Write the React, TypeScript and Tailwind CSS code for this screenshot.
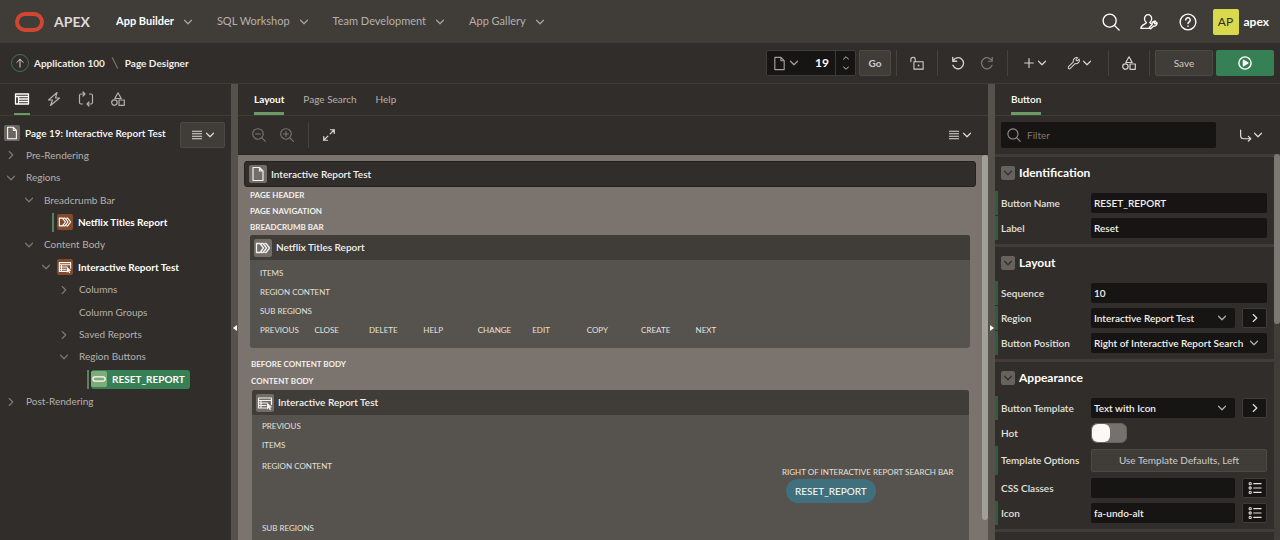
import { useState } from "react";
import type { ReactNode } from "react";
import clsx from "clsx";

type IconProps = { className?: string };

function Svg({ className = "size-4", children }: IconProps & { children: ReactNode }) {
  return (
    <svg
      viewBox="0 0 16 16"
      fill="none"
      stroke="currentColor"
      strokeWidth="1.2"
      strokeLinecap="round"
      strokeLinejoin="round"
      aria-hidden="true"
      className={clsx("shrink-0", className)}
    >
      {children}
    </svg>
  );
}

const ChevronDown = ({ className = "size-2" }: IconProps) => (
  <Svg className={className}>
    <path d="M1 4.5 8 11.5 15 4.5" strokeWidth="2.4" />
  </Svg>
);

const ChevronUp = ({ className = "size-2" }: IconProps) => (
  <Svg className={className}>
    <path d="M1 11.5 8 4.5 15 11.5" strokeWidth="2.4" />
  </Svg>
);

const ChevronRight = ({ className = "size-2" }: IconProps) => (
  <Svg className={className}>
    <path d="M4.5 1 11.5 8 4.5 15" strokeWidth="2.4" />
  </Svg>
);

const FileIcon = ({ className }: IconProps) => (
  <Svg className={className}>
    <path d="M3 1.5h6.5L13 5v9.5H3zM9.5 1.5V5H13" />
  </Svg>
);

const LinesIcon = ({ className = "size-3" }: IconProps) => (
  <Svg className={className}>
    <path d="M0 2h16M0 6h16M0 10h16M0 14h16" strokeWidth="1.6" strokeLinecap="butt" />
  </Svg>
);

const SearchIcon = ({ className }: IconProps) => (
  <Svg className={className}>
    <circle cx="6.8" cy="6.8" r="5.8" />
    <path d="m11 11 4.2 4.2" />
  </Svg>
);

const ShapesIcon = ({ className }: IconProps) => (
  <Svg className={className}>
    <path d="M8 1.8 11.2 7.5H4.8zM9 9h5.3v5.3H9z" />
    <circle cx="4.4" cy="11.6" r="2.7" />
  </Svg>
);

const BreadcrumbIcon = ({ className }: IconProps) => (
  <Svg className={className}>
    <path d="M1.5 3.5h3.5L8.5 8 5 12.5H1.5zM6.5 3.5H8L11.5 8 8 12.5H6.5M10 3.5h1L14.5 8 11 12.5h-1" strokeWidth="1.3" />
  </Svg>
);

const ReportIcon = ({ className }: IconProps) => (
  <Svg className={className}>
    <path d="M9.5 13H1.5V3h13v6.5M1.5 5.5h13M1.5 8h9M1.5 10.5h7.5M4 5.5V13" strokeWidth="1.2" />
    <path d="m10 7.8 5.2 4.4-2.3.2 1.1 2.2-1.2.6-1.1-2.2-1.7 1.5z" fill="currentColor" stroke="none" />
  </Svg>
);

const PillIcon = ({ className }: IconProps) => (
  <Svg className={className}>
    <rect x="1" y="5.5" width="14" height="5" rx="2.5" strokeWidth="1.4" />
  </Svg>
);

const ListIcon = ({ className }: IconProps) => (
  <Svg className={className}>
    <path d="M6.5 3H15M6.5 8H15M6.5 13H15" />
    <circle cx="2.5" cy="3" r="1.3" />
    <circle cx="2.5" cy="8" r="1.3" />
    <circle cx="2.5" cy="13" r="1.3" />
  </Svg>
);

const WrenchIcon = ({ className }: IconProps) => (
  <Svg className={className}>
    <path d="M13.9 3.6 11.6 5.6 10.2 4.3 12.2 2A3.9 3.9 0 0 0 7.3 6.8L1.8 12.2a1.4 1.4 0 0 0 2 2L9.2 8.7A3.9 3.9 0 0 0 13.9 3.6z" />
  </Svg>
);

const ZoomIcon = ({ plus }: { plus?: boolean }) => (
  <Svg className="size-[14px]">
    <circle cx="6.8" cy="6.8" r="6" />
    <path d="m11.2 11.2 4.2 4.2M4 6.8h5.600" />
    {plus && <path d="M6.8 4v5.600" />}
  </Svg>
);

const UndoIcon = () => (
  <Svg className="size-[14px]">
    <path d="M2 1.5v4.5h4.5M2.300 5.700A6.300 6.300 0 1 1 2.200 10.600" strokeWidth="1.500" />
  </Svg>
);

const RedoIcon = () => (
  <Svg className="size-[14px]">
    <path d="M14 1.5v4.5H9.500M13.700 5.700A6.300 6.300 0 1 0 13.800 10.600" strokeWidth="1.400" />
  </Svg>
);

const NAV = ["App Builder", "SQL Workshop", "Team Development", "App Gallery"];

type TreeNode = {
  label: string;
  pad: string;
  toggle?: "open" | "closed";
  kind?: "breadcrumb" | "report" | "button";
  changed?: boolean;
};

const TREE: TreeNode[] = [
  { label: "Pre-Rendering", pad: "pl-[7px]", toggle: "closed" },
  { label: "Regions", pad: "pl-[7px]", toggle: "open" },
  { label: "Breadcrumb Bar", pad: "pl-[25px]", toggle: "open" },
  { label: "Netflix Titles Report", pad: "pl-[52px]", kind: "breadcrumb", changed: true },
  { label: "Content Body", pad: "pl-[25px]", toggle: "open" },
  { label: "Interactive Report Test", pad: "pl-[42px]", toggle: "open", kind: "report" },
  { label: "Columns", pad: "pl-[60px]", toggle: "closed" },
  { label: "Column Groups", pad: "pl-[79px]" },
  { label: "Saved Reports", pad: "pl-[60px]", toggle: "closed" },
  { label: "Region Buttons", pad: "pl-[60px]", toggle: "open" },
  { label: "RESET_REPORT", pad: "pl-[87px]", kind: "button", changed: true },
  { label: "Post-Rendering", pad: "pl-[7px]", toggle: "closed" },
];

const BUTTON_SLOTS = ["PREVIOUS", "CLOSE", "DELETE", "HELP", "CHANGE", "EDIT", "COPY", "CREATE", "NEXT"];

function Divider() {
  return <span className="h-[26px] w-px bg-[#46423d]" />;
}

function Header() {
  return (
    <header className="flex h-[43px] shrink-0 items-center bg-[#403c38] pr-[11px] pl-[15px]">
      <a href="#home" className="flex items-center gap-[10px]">
        <svg viewBox="0 0 29 20" className="h-5 w-[29px]" aria-hidden="true">
          <rect x="2" y="2" width="25" height="16" rx="8" fill="none" stroke="#cf4733" strokeWidth="4" />
        </svg>
        <span className="w-[52px] text-[14px] font-bold text-[#dedbd8]">APEX</span>
      </a>
      <nav className="flex items-center gap-[25px] pl-[10px]">
        {NAV.map((item, i) => (
          <button
            key={item}
            className={clsx(
              "flex items-center gap-[10px] text-[11px]",
              i === 0 ? "font-bold text-white" : "text-[#b5b1ad]",
            )}
          >
            {item}
            <ChevronDown className="size-2 text-[#a8a4a0]" />
          </button>
        ))}
      </nav>
      <div className="ml-auto flex items-center text-white">
        <button aria-label="Search">
          <SearchIcon className="size-[18px]" />
        </button>
        <button aria-label="Administration" className="ml-5">
          <Svg className="size-[18px]">
            <path d="M4 5.200a3.200 3.700 0 0 1 6.400 0c0 1.700-.8 2.800-1.700 3.300M5.700 8.500C4.800 8 4 6.900 4 5.200M5.700 8.500c0 1.500-4.900 1.500-4.900 5.200h8.700M8.700 8.500l1.300 1" />
            <path d="m14.900 8.300-1.500 1.400-1-1 1.400-1.400a2.400 2.400 0 0 0-3 3L8.300 12.800l1.200 1.300 2.600-2.500a2.400 2.400 0 0 0 2.800-3.300z" />
          </Svg>
        </button>
        <button aria-label="Help" className="ml-[21px]">
          <Svg className="size-[18px]">
            <circle cx="8" cy="8" r="7" />
            <path d="M6 6.300a2 2 0 1 1 3 1.700c-.7.400-1 .7-1 1.400M8 11.500v.2" strokeWidth="1.300" />
          </Svg>
        </button>
        <button className="ml-4 flex items-center gap-[5px] text-[12px] font-bold">
          <span className="flex size-[26px] items-center justify-center rounded-[2px] bg-[#d9d94d] text-[12px] font-normal text-[#312d2a]">
            AP
          </span>
          apex
        </button>
      </div>
    </header>
  );
}

function PageToolbar() {
  return (
    <div className="flex h-[41px] shrink-0 items-center border-b border-[#403c38] pr-[6px] pl-[11px] text-[#d5d2cf]">
      <a
        href="#up"
        aria-label="Up"
        className="flex size-[18px] items-center justify-center rounded-full border border-[#48686f]"
      >
        <Svg className="size-[10px]">
          <path d="M8 14.500V2M3 7l5-5 5 5" strokeWidth="1.600" />
        </Svg>
      </a>
      <div className="flex items-center gap-1 pl-[5px] text-[10px] font-bold text-[#efedeb]">
        <a href="#app">Application 100</a>
        <Svg className="size-3 text-[#7d7873]">
          <path d="M4.500 1 11.500 15" strokeWidth="1.500" />
        </Svg>
        <span>Page Designer</span>
      </div>
      <div className="ml-auto flex items-center">
        <div className="flex h-[26px] items-stretch rounded-[2px] border border-[#403c38] bg-[#161513]">
          <button aria-label="Page Finder" className="flex items-center gap-[3px] pl-[5px] text-[#a5a19d]">
            <FileIcon className="size-[15px]" />
            <ChevronDown />
          </button>
          <input
            aria-label="Page number"
            defaultValue="19"
            className="w-[37px] bg-transparent pr-[6px] text-right text-[12px] font-bold text-white outline-none"
          />
          <span className="flex w-5 flex-col items-center justify-between border-l border-[#403c38] py-1">
            <button aria-label="Next page">
              <ChevronUp className="size-[6px]" />
            </button>
            <button aria-label="Previous page">
              <ChevronDown className="size-[6px]" />
            </button>
          </span>
        </div>
        <button className="ml-[3px] h-[26px] w-8 rounded-[2px] border border-[#4d4944] bg-[#403c38] text-[10px] font-bold text-[#cfccc8]">
          Go
        </button>
        <div className="flex items-center pl-[5px]">
          <Divider />
          <button aria-label="Unlocked" className="flex w-10 justify-center">
            <Svg className="size-[14px]">
              <path d="M4.500 6.500h10.500v8.500H4.500zM1 6.500V4a2.500 2.500 0 0 1 5 0v2.500" />
              <path d="M9.800 10.500v.5" strokeWidth="1.800" />
            </Svg>
          </button>
          <Divider />
          <div className="flex w-[69px] justify-between px-[13px]">
            <button aria-label="Undo">
              <UndoIcon />
            </button>
            <button aria-label="Redo" className="text-[#7d7873]">
              <RedoIcon />
            </button>
          </div>
          <Divider />
          <div className="flex w-[100px] items-center justify-between pr-[17px] pl-4">
            <button aria-label="Create" className="flex items-center gap-1">
              <Svg className="size-[10px]">
                <path d="M8 1v14M1 8h14" strokeWidth="1.800" />
              </Svg>
              <ChevronDown />
            </button>
            <button aria-label="Utilities" className="flex items-center gap-[2px]">
              <WrenchIcon className="size-[14px]" />
              <ChevronDown />
            </button>
          </div>
          <Divider />
          <button aria-label="Shared Components" className="flex w-10 justify-center">
            <ShapesIcon />
          </button>
          <Divider />
        </div>
        <button className="ml-[5px] h-[26px] w-[58px] rounded-[2px] border border-[#4d4944] bg-[#403c38] text-[10px] text-[#cfccc8]">
          Save
        </button>
        <button
          aria-label="Save and Run Page"
          className="ml-[3px] flex h-[26px] w-[58px] items-center justify-center rounded-[2px] bg-[#378056] text-white"
        >
          <Svg className="size-[14px]">
            <circle cx="8" cy="8" r="7" strokeWidth="1.600" />
            <path d="m6 4.500 5.500 3.500L6 11.500z" fill="currentColor" />
          </Svg>
        </button>
      </div>
    </div>
  );
}

const KIND_ICON = { breadcrumb: BreadcrumbIcon, report: ReportIcon, button: PillIcon };

function TreeRow({ node }: { node: TreeNode }) {
  const Icon = node.kind && KIND_ICON[node.kind];
  const isButton = node.kind === "button";
  return (
    <li className={clsx("flex items-center", node.pad)}>
      {node.toggle && (
        <button
          aria-label={`Toggle ${node.label}`}
          className={clsx("flex text-[#7d7873]", Icon ? "mr-[7px]" : "mr-[11px]")}
        >
          {node.toggle === "open" ? <ChevronDown /> : <ChevronRight />}
        </button>
      )}
      {node.changed && <span className={clsx("h-[19px] w-[2px] bg-[#5a8159]", isButton ? "mr-[2px]" : "mr-[3px]")} />}
      {Icon ? (
        <a
          href={`#${node.label}`}
          className={clsx(
            "flex items-center gap-[5px] text-[10px] font-bold text-white",
            isButton && "h-[19px] rounded-[3px] bg-[#378056] pr-[5px]",
          )}
        >
          <span
            className={clsx(
              "flex size-4 items-center justify-center rounded-[2px]",
              isButton ? "bg-[#7fab78]" : "bg-[#844a2c]",
            )}
          >
            <Icon className="size-[14px]" />
          </span>
          {node.label}
        </a>
      ) : (
        <a href={`#${node.label}`} className="text-[10px] text-[#b5b1ad]">
          {node.label}
        </a>
      )}
    </li>
  );
}

function LeftPane() {
  const tabs = [
    { name: "Rendering", icon: <Svg><path d="M1.500 3h13v10h-13zM1.500 5.500h13M4.500 5.500v7.500M4.500 8h10M4.500 10.500h10" strokeWidth="1.300" /></Svg> },
    { name: "Dynamic Actions", icon: <Svg><path d="M11 1.500 2.500 9h4L4.500 14.500 13.500 7H9.500z" /></Svg> },
    {
      name: "Processing",
      icon: <Svg><path d="M6.500 3H3a1.500 1.500 0 0 0-1.500 1.500v7A1.500 1.500 0 0 0 3 13h1.500M11.500 3H13a1.500 1.500 0 0 1 1.500 1.500v7A1.500 1.500 0 0 1 13 13H9.500M5 1l2 2-2 2M11 11l-2 2 2 2" /></Svg>,
    },
    { name: "Page Shared Components", icon: <ShapesIcon /> },
  ];
  return (
    <aside className="w-[231px] shrink-0">
      <div className="flex h-8 items-stretch gap-4 border-b border-[#403c38] pl-[14px]">
        {tabs.map((tab, i) => (
          <button
            key={tab.name}
            aria-label={tab.name}
            className={clsx(
              "flex h-[31px] items-center border-b-2",
              i === 0 ? "border-[#6a9a66] text-white" : "border-transparent text-[#b5b1ad]",
            )}
          >
            {tab.icon}
          </button>
        ))}
      </div>
      <div className="flex h-7 items-start justify-between pt-[6px] pr-[6px] pl-1">
        <a href="#page" className="flex h-[22px] items-center gap-[5px] text-[10px] font-semibold text-white">
          <span className="flex size-4 items-center justify-center rounded-[2px] bg-[#6b6560]">
            <FileIcon className="size-[14px]" />
          </span>
          Page 19: Interactive Report Test
        </a>
        <button
          aria-label="Tree menu"
          className="flex h-[26px] w-[45px] shrink-0 items-center justify-center gap-1 rounded-[2px] border border-[#4d4944] bg-[#403c38] text-[#dedbd8]"
        >
          <LinesIcon className="size-[10px]" />
          <ChevronDown />
        </button>
      </div>
      <ul className="grid h-[269px] auto-rows-fr">
        {TREE.map((node) => (
          <TreeRow key={node.label} node={node} />
        ))}
      </ul>
    </aside>
  );
}

function Splitter({ side }: { side: "left" | "right" }) {
  return (
    <div className="flex w-[7px] shrink-0 items-center justify-center bg-[#56524b] pt-8">
      <button aria-label={`Collapse ${side} pane`} className="text-white">
        <svg viewBox="0 0 4 6" className="h-[6px] w-1" fill="currentColor" aria-hidden="true">
          <path d={side === "left" ? "M4 0v6L0 3z" : "M0 0v6l4-3z"} />
        </svg>
      </button>
    </div>
  );
}

function CardTitle({ icon, children, className }: { icon: ReactNode; children: ReactNode; className: string }) {
  return (
    <div className={clsx("flex items-center gap-1 px-1 text-[10px] font-semibold text-[#f3f1ef]", className)}>
      <span className="flex size-[18px] items-center justify-center rounded-[2px] bg-[#736c67]">{icon}</span>
      {children}
    </div>
  );
}

function CenterPane() {
  const [active, setActive] = useState("Layout");
  return (
    <main className="flex min-w-0 flex-1 flex-col">
      <div className="flex h-8 shrink-0 gap-[19px] border-b border-[#403c38] pl-4 text-[10px]">
        {["Layout", "Page Search", "Help"].map((tab) => (
          <button
            key={tab}
            onClick={() => setActive(tab)}
            className={clsx(
              "h-[31px] border-b-3 pt-[2px]",
              active === tab ? "border-[#6a9a66] font-bold text-white" : "border-transparent text-[#b5b1ad]",
            )}
          >
            {tab}
          </button>
        ))}
      </div>
      <div className="flex h-[39px] shrink-0 items-center gap-[14px] border-b border-[#2a2624] pr-[17px] pl-[14px] text-[#7d7873]">
        <button aria-label="Zoom out">
          <ZoomIcon />
        </button>
        <button aria-label="Zoom in">
          <ZoomIcon plus />
        </button>
        <Divider />
        <button aria-label="Expand" className="text-[#dedbd8]">
          <Svg className="size-3">
            <path d="M1 10v5h5M1 15l5.500-5.500M10 1h5v5M15 1 9.500 6.500" strokeWidth="1.600" />
          </Svg>
        </button>
        <button aria-label="Layout menu" className="ml-auto flex items-center gap-1 text-[#dedbd8]">
          <LinesIcon className="size-[10px]" />
          <ChevronDown />
        </button>
      </div>
      <div className="flex min-h-0 flex-1 overflow-hidden bg-[#7a736e]">
        <div className="min-w-0 flex-1 pt-[6px] pr-[6px] pl-[6px] text-[8px] text-[#e4e1de]">
          <CardTitle icon={<FileIcon />} className="h-[26px] rounded-[3px] border border-[#25211f] bg-[#312d2a]">
            Interactive Report Test
          </CardTitle>
          <div className="flex flex-col pl-[6px] leading-4 font-bold text-[#f3f1ef]">
            <span>PAGE HEADER</span>
            <span>PAGE NAVIGATION</span>
            <span>BREADCRUMB BAR</span>
          </div>
          <section className="mr-[6px] ml-[6px] rounded-[3px] bg-[#56524d] pb-2">
            <CardTitle icon={<BreadcrumbIcon />} className="h-[25px] rounded-t-[3px] bg-[#403c38]">
              Netflix Titles Report
            </CardTitle>
            <div className="flex flex-col px-[10px] pt-1 leading-[19px]">
              <span>ITEMS</span>
              <span>REGION CONTENT</span>
              <span>SUB REGIONS</span>
              <div className="grid w-[490px] grid-cols-9">
                {BUTTON_SLOTS.map((slot) => (
                  <span key={slot}>{slot}</span>
                ))}
              </div>
            </div>
          </section>
          <div className="flex flex-col pt-2 pl-[7px] leading-[17px] font-bold text-[#f3f1ef]">
            <span>BEFORE CONTENT BODY</span>
            <span>CONTENT BODY</span>
          </div>
          <section className="mr-[7px] ml-2 rounded-[3px] bg-[#56524d] pb-8">
            <CardTitle icon={<ReportIcon />} className="h-[25px] rounded-t-[3px] bg-[#403c38]">
              Interactive Report Test
            </CardTitle>
            <div className="flex flex-col px-[10px] pt-[2px] leading-[19px]">
              <span>PREVIOUS</span>
              <span>ITEMS</span>
              <div className="flex justify-between pt-[2px] pr-[7px]">
                <span>REGION CONTENT</span>
                <div className="flex w-[170px] flex-col items-start pt-2 leading-[14px]">
                  <span className="whitespace-nowrap">RIGHT OF INTERACTIVE REPORT SEARCH BAR</span>
                  <button className="ml-1 h-6 rounded-full bg-[#40707e] px-[9px] text-[10px] text-white">
                    RESET_REPORT
                  </button>
                </div>
              </div>
              <span className="pt-4">SUB REGIONS</span>
            </div>
          </section>
        </div>
        <div className="w-[6px]">
          <div className="h-[365px] rounded-[3px] bg-[#a29e9a]" />
        </div>
      </div>
    </main>
  );
}

function PropertySection({ title, children }: { title: string; children: ReactNode }) {
  return (
    <section className="border-b-3 border-[#403c38] pb-1">
      <h3 className="flex h-[34px] items-center gap-1 pb-[2px] pl-[6px] text-[12px] font-bold text-white">
        <button
          aria-label={`Collapse ${title}`}
          className="flex size-[14px] items-center justify-center rounded-[2px] bg-[#67625d] text-[#312d2a]"
        >
          <ChevronDown />
        </button>
        {title}
      </h3>
      <div className="flex flex-col gap-px">{children}</div>
    </section>
  );
}

type PropertyProps = { id: string; label: string; changed?: boolean; tall?: boolean; children: ReactNode };

function Property({ id, label, changed = true, tall, children }: PropertyProps) {
  return (
    <div
      className={clsx(
        "flex items-center border-l-3 pr-[7px] pl-[3px]",
        tall ? "h-[29px]" : "h-6",
        changed ? "border-[#2f5d40]" : "border-transparent",
      )}
    >
      <label htmlFor={id} className="w-[90px] shrink-0 text-[10px] font-semibold text-[#e4e1de]">
        {label}
      </label>
      <div className="flex min-w-0 flex-1 items-center gap-[7px]">{children}</div>
    </div>
  );
}

function TextField({ id, value }: { id: string; value: string }) {
  return (
    <input
      id={id}
      defaultValue={value}
      className="h-5 min-w-0 flex-1 rounded-[2px] bg-[#161513] px-[3px] text-[10px] font-semibold text-[#f3f1ef] outline-none"
    />
  );
}

function SelectField({ id, value }: { id: string; value: string }) {
  return (
    <div className="relative min-w-0 flex-1">
      <select
        id={id}
        defaultValue={value}
        className="block h-5 w-full appearance-none rounded-[2px] bg-[#161513] pr-[23px] pl-[3px] text-[10px] font-semibold text-[#f3f1ef] outline-none"
      >
        <option>{value}</option>
      </select>
      <ChevronDown className="pointer-events-none absolute top-[6px] right-[9px] size-2 text-[#b5b1ad]" />
    </div>
  );
}

function SquareButton({ label, children }: { label: string; children: ReactNode }) {
  return (
    <button
      aria-label={label}
      className="flex h-5 w-[25px] shrink-0 items-center justify-center rounded-[2px] border border-[#403c38] bg-[#161513] text-[#e4e1de]"
    >
      {children}
    </button>
  );
}

function RightPane() {
  return (
    <aside className="flex w-[285px] shrink-0 flex-col">
      <div className="flex h-8 shrink-0 border-b border-[#403c38] pl-4">
        <button className="h-[31px] border-b-3 border-[#6a9a66] pt-[2px] text-[10px] font-semibold text-white">
          Button
        </button>
      </div>
      <div className="flex h-[38px] shrink-0 items-center justify-between pr-[18px] pl-[6px]">
        <div className="flex h-[26px] w-[215px] items-center gap-[6px] rounded-[2px] bg-[#161513] pl-[6px] text-[#9a9590]">
          <SearchIcon className="size-[14px]" />
          <input
            aria-label="Filter properties"
            placeholder="Filter"
            className="min-w-0 flex-1 bg-transparent text-[10px] outline-none placeholder:text-[#7d7873]"
          />
        </div>
        <button aria-label="Go to group" className="flex items-center gap-[2px] text-[#dedbd8]">
          <Svg className="size-[13px]">
            <path d="M2 1.500v6.500a4 4 0 0 0 4 4h8.500M11.500 9l3 3-3 3" strokeWidth="1.500" />
          </Svg>
          <ChevronDown />
        </button>
      </div>
      <div className="flex min-h-0 flex-1 overflow-hidden">
        <div className="min-w-0 flex-1 border-t-3 border-[#403c38]">
          <PropertySection title="Identification">
            <Property id="name" label="Button Name">
              <TextField id="name" value="RESET_REPORT" />
            </Property>
            <Property id="label" label="Label">
              <TextField id="label" value="Reset" />
            </Property>
          </PropertySection>
          <PropertySection title="Layout">
            <Property id="sequence" label="Sequence">
              <TextField id="sequence" value="10" />
            </Property>
            <Property id="region" label="Region">
              <SelectField id="region" value="Interactive Report Test" />
              <SquareButton label="Go to region">
                <ChevronRight />
              </SquareButton>
            </Property>
            <Property id="position" label="Button Position">
              <SelectField id="position" value="Right of Interactive Report Search Bar" />
            </Property>
          </PropertySection>
          <PropertySection title="Appearance">
            <Property id="template" label="Button Template">
              <SelectField id="template" value="Text with Icon" />
              <SquareButton label="Go to template">
                <ChevronRight />
              </SquareButton>
            </Property>
            <Property id="hot" label="Hot" changed={false}>
              <input
                id="hot"
                type="checkbox"
                role="switch"
                className="h-5 w-9 appearance-none rounded-[6px] border border-[#67625d] bg-[#76716c] before:block before:size-[18px] before:rounded-[6px] before:bg-[#fbf9f8] checked:before:ml-4"
              />
            </Property>
            <Property id="options" label="Template Options" tall>
              <button
                id="options"
                className="h-[23px] flex-1 rounded-[2px] border border-[#4d4944] bg-[#403c38] text-[10px] text-[#cfccc8]"
              >
                Use Template Defaults, Left
              </button>
            </Property>
            <Property id="css" label="CSS Classes" changed={false}>
              <TextField id="css" value="" />
              <SquareButton label="Pick CSS classes">
                <ListIcon className="size-[14px]" />
              </SquareButton>
            </Property>
            <Property id="icon" label="Icon">
              <TextField id="icon" value="fa-undo-alt" />
              <SquareButton label="Pick icon">
                <ListIcon className="size-[14px]" />
              </SquareButton>
            </Property>
          </PropertySection>
        </div>
        <div className="w-[6px] bg-[#403c38]">
          <div className="h-[170px] rounded-[3px] bg-[#7b7772]" />
        </div>
      </div>
    </aside>
  );
}

export default function App() {
  return (
    <div className="flex h-screen flex-col overflow-hidden bg-[#312d2a] font-['Lato',sans-serif]">
      <Header />
      <PageToolbar />
      <div className="flex min-h-0 flex-1">
        <LeftPane />
        <Splitter side="left" />
        <CenterPane />
        <Splitter side="right" />
        <RightPane />
      </div>
    </div>
  );
}
